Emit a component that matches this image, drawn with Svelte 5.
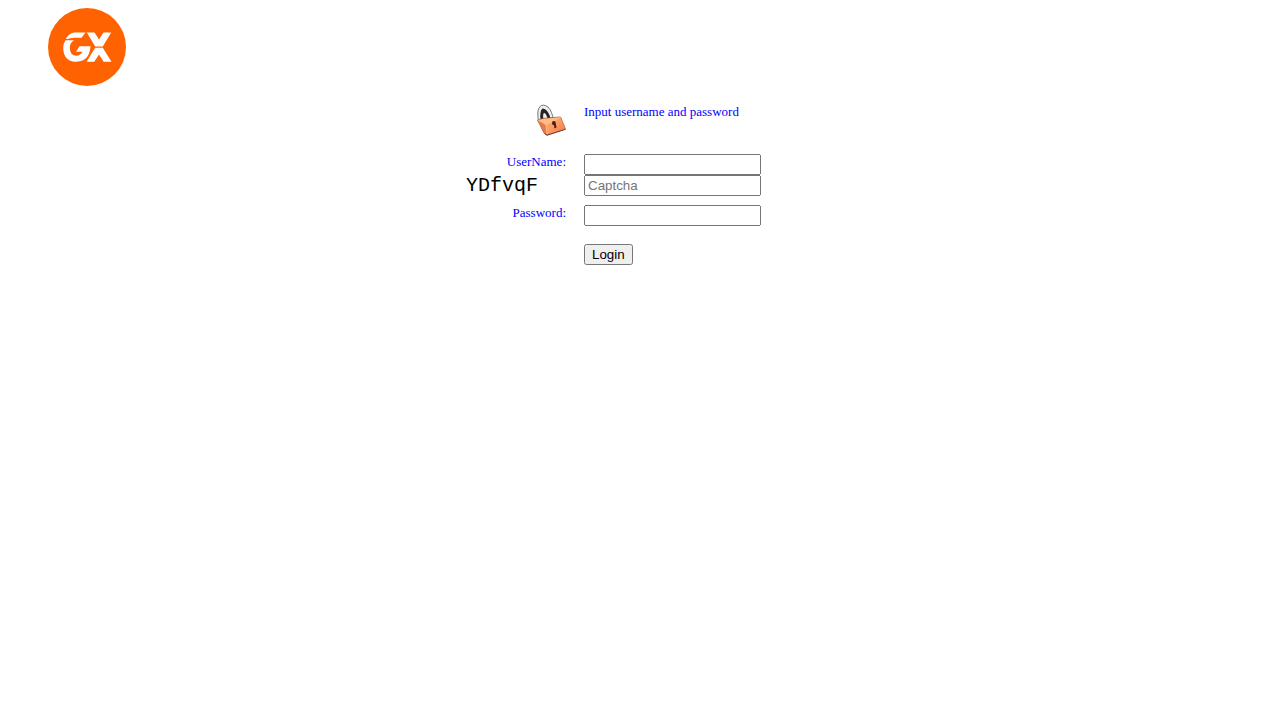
<script>
  let username = $state('');
  let captcha = $state('');
  let password = $state('');
</script>

<header>
  <svg class="logo" viewBox="0 0 78 78" role="img" aria-label="GX">
    <circle cx="39" cy="39" r="39" fill="#ff6200" />
    <g fill="#fff">
      <path d="M26 24.500H37.500L33.500 29.800H26Q22 30 19.500 31H17.800Q20.500 25.500 26 24.500Z" />
      <path d="M17.500 32.300H26Q21.800 35 21.800 39.500Q21.800 47.500 28.500 47.800Q32.500 47.500 34.500 43.800H28L31.500 38.200H42.500Q42 47 37 51Q33.500 53.800 27.500 53.800Q15.500 53 15.200 40Q15.200 35.500 17.500 32.300Z" />
      <path d="M38.800 24.500H46.500L51 31.500L55.500 24.500H63.200L54.800 38.500H47.200Z" />
      <path d="M47.200 39.700H54.800L63.500 53.700H55.700L51 46.500L46.300 53.700H38.500Z" />
    </g>
  </svg>
</header>

<main>
  <form onsubmit={(event) => event.preventDefault()}>
    <svg class="lock" viewBox="0 0 30 32" aria-hidden="true">
      <defs>
        <linearGradient id="face" x1="0" y1="0" x2="1" y2="1">
          <stop offset="0" stop-color="#ffac72" />
          <stop offset="0.500" stop-color="#ff9860" />
          <stop offset="1" stop-color="#ef7644" />
        </linearGradient>
      </defs>
      <path d="M2.500 17Q0.500 6 4 2.500Q7 -0.500 12 3Q16 7 17.500 16L14 18Z" fill="#efefef" stroke="#777" />
      <path d="M4.500 16Q3.500 6.500 6.500 4.500Q11.500 4 15 15L12 16Q10 8.500 8 9Q6.500 10 7.500 16Z" fill="#252525" />
      <path d="M1.500 16L8.500 14.300L24.500 13L29.500 25L11 31L8 29Z" fill="#f18a52" stroke="#9a5434" stroke-width="0.800" stroke-linejoin="round" />
      <path d="M2 16L8.500 14.700L24 13.300L10 20.500Z" fill="#ffbd87" />
      <path d="M2 16.500L10 20.500L11 30.500L8.500 28.500Z" fill="#e87a47" />
      <path d="M10 20.500L24.500 13.500L29.300 24.800L11 30.500Z" fill="url(#face)" />
      <path d="M2 16L10 20.500L24.500 13.500M10 20.500L11 30" fill="none" stroke="#ffc698" stroke-width="0.800" />
      <path d="M8.500 29.500L11 31.300L29.500 25.300" fill="none" stroke="#59301f" stroke-width="0.800" />
      <path d="M16 18Q18 15.800 19.500 18L20.500 23.500L18.500 24.500L18 21L16.500 21Z" fill="#4a1f10" />
    </svg>
    <p class="prompt">Input username and password</p>

    <label for="username">UserName:</label>
    <input id="username" type="text" autocomplete="username" bind:value={username} />

    <label class="code" for="captcha">YDfvqF</label>
    <input id="captcha" type="text" placeholder="Captcha" autocomplete="off" bind:value={captcha} />

    <label class="password-label" for="password">Password:</label>
    <input id="password" type="password" autocomplete="current-password" bind:value={password} />

    <button type="submit">Login</button>
  </form>
</main>

<style>
  :global(body) {
    background: #fff;
  }

  header {
    padding: 8px 48px 18px;
  }

  .logo {
    display: block;
    width: 78px;
    height: 78px;
  }

  form {
    display: grid;
    grid-template-columns: 100px minmax(0, 230px);
    column-gap: 18px;
    justify-content: center;
    align-items: start;
    font: 13px/15px "Liberation Serif", "Times New Roman", serif;
    color: #00f;
  }

  .lock {
    width: 30px;
    height: 32px;
    justify-self: end;
    margin-bottom: 18px;
  }

  .prompt {
    margin: 0;
  }

  label {
    text-align: right;
  }

  .code {
    text-align: left;
    font: 20px/21px "Courier New", "Liberation Mono", monospace;
    color: #000;
  }

  input {
    box-sizing: border-box;
    width: 177px;
    max-width: 100%;
    height: 21px;
    margin: 0;
    font-family: "Liberation Sans", Arial, sans-serif;
  }

  .password-label,
  #password {
    margin-top: 9px;
  }

  button {
    grid-column: 2;
    justify-self: start;
    height: 21px;
    margin: 18px 0 0;
    font-family: "Liberation Sans", Arial, sans-serif;
  }
</style>
